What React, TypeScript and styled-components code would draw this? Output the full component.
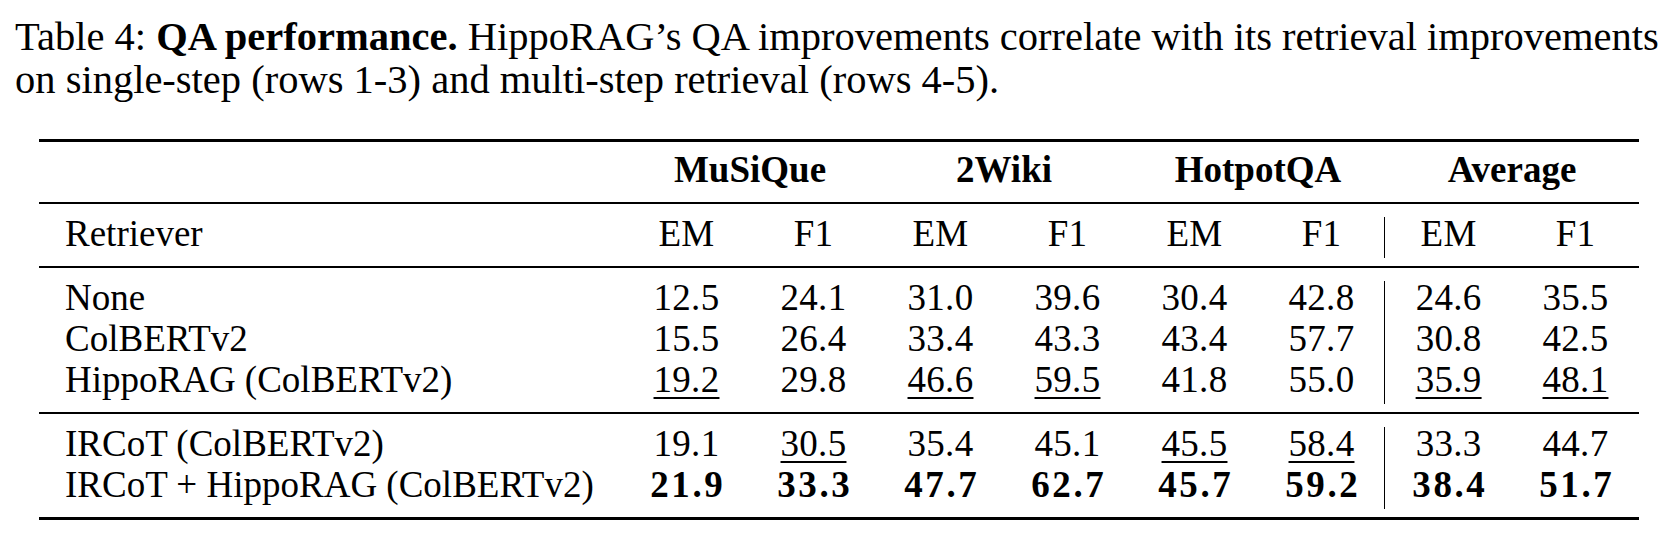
import styled, { createGlobalStyle } from "styled-components";

const GlobalStyle = createGlobalStyle`
  html, body {
    margin: 0;
    padding: 0;
    background: #ffffff;
  }
  body {
    font-family: "Liberation Serif", "Times New Roman", serif;
    color: #000000;
  }
`;

const Page = styled.div`
  display: flex;
  flex-direction: column;
  padding: 16px 0 0 15px;
  width: 1661px;
`;

const Caption = styled.p`
  margin: 0;
  width: 1650px;
  font-size: 40.5px;
  line-height: 42.5px;
  b {
    font-weight: 700;
  }
`;

const Table = styled.div`
  display: flex;
  flex-direction: column;
  width: 1600px;
  margin: 38px 0 0 24px;
  font-size: 37px;
`;

const Rule = styled.div<{ $thick?: boolean; $first?: boolean }>`
  height: ${(p) => (p.$thick ? 3 : 2)}px;
  background: #000000;
  margin-top: ${(p) => (p.$first ? 0 : 8)}px;
  margin-bottom: ${(p) => (p.$thick ? 11 : 13)}px;
  &:last-child {
    margin-bottom: 0;
  }
`;

const Row = styled.div`
  display: grid;
  grid-template-columns: 584px repeat(8, 127px);
  height: 41px;
`;

const Cell = styled.div`
  line-height: 33px;
  padding-bottom: 8px;
  white-space: nowrap;
`;

const NameCell = styled(Cell)`
  padding-left: 26px;
`;

const GroupCell = styled(Cell)`
  grid-column: span 2;
  text-align: center;
  font-weight: 700;
`;

const NumCell = styled(Cell)<{ $bar?: boolean; $bold?: boolean }>`
  text-align: center;
  border-left: ${(p) => (p.$bar ? "1.6px solid #000" : "none")};
  margin-left: ${(p) => (p.$bar ? "-0.8px" : "0")};
  font-weight: ${(p) => (p.$bold ? 700 : 400)};
  letter-spacing: ${(p) => (p.$bold ? "2.6px" : "0.3px")};
  text-indent: ${(p) => (p.$bold ? "2.6px" : "0")};
`;

const Under = styled.span`
  text-decoration: underline;
  text-decoration-thickness: 1.5px;
  text-underline-offset: 5px;
`;

type Entry = { name: string; values: string[]; bold?: boolean };

// "_" before a value marks it underlined (second best)
const singleStep: Entry[] = [
  { name: "None", values: ["12.5", "24.1", "31.0", "39.6", "30.4", "42.8", "24.6", "35.5"] },
  { name: "ColBERTv2", values: ["15.5", "26.4", "33.4", "43.3", "43.4", "57.7", "30.8", "42.5"] },
  {
    name: "HippoRAG (ColBERTv2)",
    values: ["_19.2", "29.8", "_46.6", "_59.5", "41.8", "55.0", "_35.9", "_48.1"],
  },
];

const multiStep: Entry[] = [
  {
    name: "IRCoT (ColBERTv2)",
    values: ["19.1", "_30.5", "35.4", "45.1", "_45.5", "_58.4", "33.3", "44.7"],
  },
  {
    name: "IRCoT + HippoRAG (ColBERTv2)",
    values: ["21.9", "33.3", "47.7", "62.7", "45.7", "59.2", "38.4", "51.7"],
    bold: true,
  },
];

const datasets = ["MuSiQue", "2Wiki", "HotpotQA", "Average"];

function DataRow({ entry }: { entry: Entry }) {
  return (
    <Row>
      <NameCell>{entry.name}</NameCell>
      {entry.values.map((v, i) => (
        <NumCell key={i} $bar={i === 6} $bold={entry.bold}>
          {v.startsWith("_") ? <Under>{v.slice(1)}</Under> : v}
        </NumCell>
      ))}
    </Row>
  );
}

export default function App() {
  return (
    <>
      <GlobalStyle />
      <Page>
        <Caption>
          Table 4: <b>QA performance.</b> HippoRAG’s QA improvements correlate with its retrieval
          improvements on single-step (rows 1-3) and multi-step retrieval (rows 4-5).
        </Caption>
        <Table>
          <Rule $thick $first />
          <Row>
            <Cell />
            {datasets.map((d) => (
              <GroupCell key={d}>{d}</GroupCell>
            ))}
          </Row>
          <Rule />
          <Row>
            <NameCell>Retriever</NameCell>
            {datasets.flatMap((d, i) => [
              <NumCell key={d + "em"} $bar={i === 3}>
                EM
              </NumCell>,
              <NumCell key={d + "f1"}>F1</NumCell>,
            ])}
          </Row>
          <Rule />
          {singleStep.map((e) => (
            <DataRow key={e.name} entry={e} />
          ))}
          <Rule />
          {multiStep.map((e) => (
            <DataRow key={e.name} entry={e} />
          ))}
          <Rule $thick />
        </Table>
      </Page>
    </>
  );
}
